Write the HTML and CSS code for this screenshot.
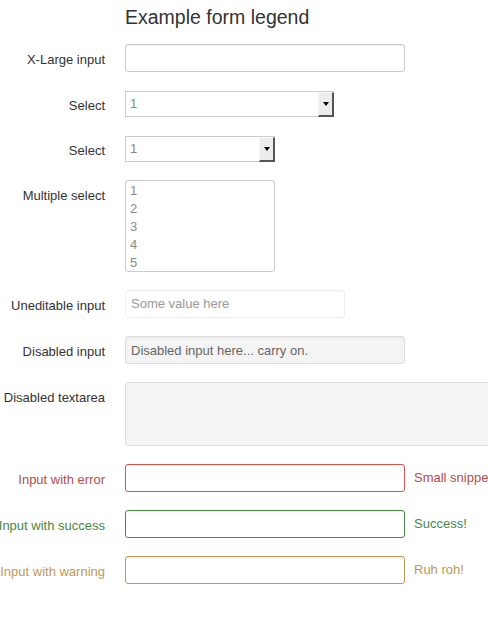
FILE: index.html
```html
<!DOCTYPE html>
<html lang="en">
<head>
    <meta charset="UTF-8">
    <meta name="viewport" content="width=device-width, initial-scale=1.0">
    <title>Example form</title>
    <link rel="stylesheet" href="styles.css">
</head>
<body>
    <form class="form-horizontal">
        <div class="legend">Example form legend</div>

        <div class="control-group">
            <label class="control-label">X-Large input</label>
            <div class="controls">
                <input type="text" class="input input-xlarge">
            </div>
        </div>

        <div class="control-group">
            <label class="control-label">Select</label>
            <div class="controls">
                <div class="select select-wide">
                    <span class="select-value">1</span>
                    <span class="select-btn"><span class="arrow"></span></span>
                </div>
            </div>
        </div>

        <div class="control-group">
            <label class="control-label">Select</label>
            <div class="controls">
                <div class="select select-small">
                    <span class="select-value">1</span>
                    <span class="select-btn"><span class="arrow"></span></span>
                </div>
            </div>
        </div>

        <div class="control-group">
            <label class="control-label">Multiple select</label>
            <div class="controls">
                <div class="multi-select">
                    <div>1</div>
                    <div>2</div>
                    <div>3</div>
                    <div>4</div>
                    <div>5</div>
                </div>
            </div>
        </div>

        <div class="control-group">
            <label class="control-label">Uneditable input</label>
            <div class="controls">
                <span class="uneditable">Some value here</span>
            </div>
        </div>

        <div class="control-group">
            <label class="control-label">Disabled input</label>
            <div class="controls">
                <input type="text" class="input input-xlarge" placeholder="Disabled input here... carry on." disabled>
            </div>
        </div>

        <div class="control-group">
            <label class="control-label">Disabled textarea</label>
            <div class="controls">
                <textarea class="textarea" disabled></textarea>
            </div>
        </div>

        <div class="control-group error">
            <label class="control-label">Input with error</label>
            <div class="controls">
                <input type="text" class="input input-xlarge">
                <span class="help-inline">Small snippet of help text</span>
            </div>
        </div>

        <div class="control-group success">
            <label class="control-label">Input with success</label>
            <div class="controls">
                <input type="text" class="input input-xlarge">
                <span class="help-inline">Success!</span>
            </div>
        </div>

        <div class="control-group warning">
            <label class="control-label">Input with warning</label>
            <div class="controls">
                <input type="text" class="input input-xlarge">
                <span class="help-inline">Ruh roh!</span>
            </div>
        </div>
    </form>
</body>
</html>
```

FILE: styles.css
```css
html, body {
    overflow: hidden;
}

body {
    margin: 0;
    font-family: "Liberation Sans", Arial, sans-serif;
    font-size: 13px;
    line-height: 18px;
    color: #333333;
    background: #ffffff;
}

.form-horizontal {
    margin-left: -35px;
}

.legend {
    margin-left: 160px;
    font-size: 19.5px;
    line-height: 34px;
    color: #333333;
    margin-bottom: 10px;
}

.control-group {
    display: flex;
    margin-bottom: 18px;
}

.control-label {
    flex: none;
    width: 140px;
    padding-top: 7px;
    text-align: right;
    white-space: nowrap;
}

.controls {
    margin-left: 20px;
    display: flex;
    align-items: center;
    white-space: nowrap;
}

.input {
    box-sizing: border-box;
    height: 28px;
    padding: 4px 5px;
    font-family: inherit;
    font-size: 13px;
    color: #555555;
    border: 1px solid #cccccc;
    border-radius: 3px;
    background: #ffffff;
    box-shadow: inset 0 1px 1px rgba(0, 0, 0, 0.06);
    outline: none;
}

.input-xlarge {
    width: 280px;
}

.input:disabled {
    background: #f4f4f4;
    border-color: #dddddd;
}

.input:disabled::placeholder {
    color: #666666;
}

.select {
    box-sizing: border-box;
    display: flex;
    height: 26px;
    margin-top: 1px;
    border: 1px solid #cccccc;
    background: #ffffff;
}

.select-wide {
    width: 209px;
}

.select-small {
    width: 150px;
}

.select-value {
    flex: 1;
    padding: 0 4px;
    line-height: 24px;
    color: #888888;
}

.select-btn {
    box-sizing: border-box;
    width: 16px;
    margin: 0 -1px -1px 0;
    display: flex;
    align-items: center;
    justify-content: center;
    background: #ececec;
    border-top: 1px solid #f8f8f8;
    border-left: 1px solid #f8f8f8;
    border-right: 2px solid #555555;
    border-bottom: 2px solid #555555;
}

.arrow {
    width: 0;
    height: 0;
    border-left: 3px solid transparent;
    border-right: 3px solid transparent;
    border-top: 4px solid #000000;
}

.multi-select {
    box-sizing: border-box;
    width: 150px;
    height: 92px;
    padding: 1px 4px;
    border: 1px solid #cccccc;
    border-radius: 3px;
    color: #888888;
    line-height: 18px;
}

.uneditable {
    box-sizing: border-box;
    display: block;
    width: 220px;
    height: 28px;
    padding: 4px 5px;
    border: 1px solid #eeeeee;
    border-radius: 3px;
    color: #999999;
    box-shadow: inset 0 1px 2px rgba(0, 0, 0, 0.03);
}

.textarea {
    box-sizing: border-box;
    display: block;
    width: 400px;
    height: 64px;
    border: 1px solid #dddddd;
    border-radius: 3px;
    background: #f4f4f4;
    resize: none;
}

.help-inline {
    padding-left: 9px;
}

.error .control-label,
.error .help-inline {
    color: #b94a48;
}

.error .input {
    border-color: #d9534f;
}

.success .control-label,
.success .help-inline {
    color: #468847;
}

.success .input {
    border-color: #468847;
}

.warning .control-label,
.warning .help-inline {
    color: #c09853;
}

.warning .input {
    border-color: #c09853;
}
```
